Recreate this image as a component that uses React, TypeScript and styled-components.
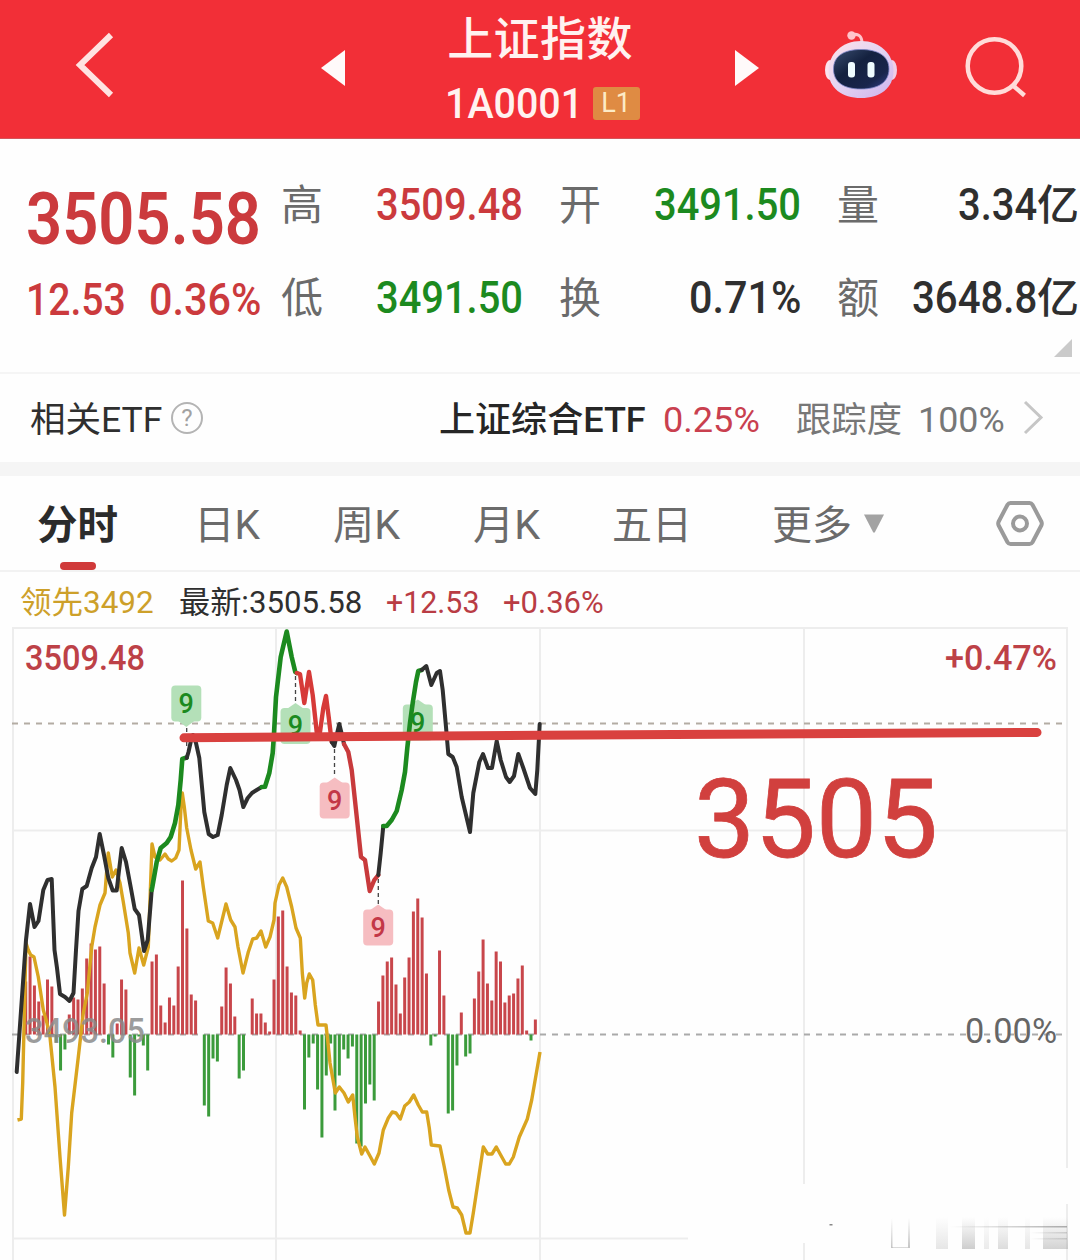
import React, { useLayoutEffect, useRef, useState } from "react";
import styled, { createGlobalStyle } from "styled-components";

const RED = "#cb3a3d";
const GREEN = "#1c8a1f";
const INK = "#2f2f2f";
const GREY = "#6b6b6b";
const FONT = 'Roboto, "Noto Sans CJK SC", sans-serif';

const GlobalStyle = createGlobalStyle`
  * { box-sizing: border-box; }
  html, body { margin: 0; padding: 0; background: #fefefe; }
  body { font-family: ${FONT}; color: ${INK}; overflow: hidden; }
  svg { display: block; }
`;

/* ---------- condensed text ---------- */

const FitBox = styled.span<{ $w: number; $ml?: number }>`
  display: inline-block;
  flex: none;
  width: ${(p) => p.$w}px;
  margin-left: ${(p) => p.$ml ?? 0}px;
  white-space: nowrap;
`;
const FitInner = styled.span`
  display: inline-block;
  transform-origin: 0 50%;
`;

function Fit({ w, ml, children }: { w: number; ml?: number; children: React.ReactNode }) {
  const ref = useRef<HTMLSpanElement>(null);
  const [scale, setScale] = useState(1);
  useLayoutEffect(() => {
    if (ref.current && ref.current.offsetWidth) setScale(w / ref.current.offsetWidth);
  }, [w]);
  return (
    <FitBox $w={w} $ml={ml}>
      <FitInner ref={ref} style={{ transform: `scaleX(${scale})` }}>
        {children}
      </FitInner>
    </FitBox>
  );
}

/* ---------- page and header ---------- */

const Page = styled.main`
  width: 1080px;
  height: 1260px;
  overflow: hidden;
  display: flex;
  flex-direction: column;
  background: #fefefe;
`;

const Header = styled.header`
  flex: none;
  height: 139px;
  background: #f22f37;
  border-bottom: 1px solid #d4555a;
  display: grid;
  grid-template-columns: 321px 24px 390px 24px 64px 74px 67px 1fr;
  align-items: start;
`;
const IconSlot = styled.div<{ $top: number; $left?: number }>`
  padding-top: ${(p) => p.$top}px;
  padding-left: ${(p) => p.$left ?? 0}px;
`;
const TitleBlock = styled.div`
  display: flex;
  flex-direction: column;
  align-items: center;
  color: #fff2f0;
`;
const Title = styled.h1`
  margin: 0;
  padding-top: 9px;
  font-size: 46px;
  font-weight: 500;
  line-height: 60px;
  letter-spacing: 0.4px;
`;
const CodeRow = styled.div`
  display: flex;
  align-items: center;
  height: 33px;
  margin-top: 18px;
  padding-left: 4px;
  font-size: 42px;
  font-weight: 500;
  line-height: 33px;
`;
const LevelBadge = styled.span`
  width: 47px;
  height: 33px;
  margin-left: 10px;
  border-radius: 3px;
  background: #df8b43;
  color: #fdebc6;
  font-size: 27px;
  font-weight: 400;
  line-height: 33px;
  text-align: center;
`;

/* ---------- quote ---------- */

const Quote = styled.section`
  flex: none;
  height: 235px;
  display: flex;
  border-bottom: 2px solid #f5f5f5;
`;
const LastPrice = styled.div`
  width: 281px;
  padding: 34px 0 0 26px;
  color: ${RED};
`;
const BigPrice = styled.div`
  font-size: 73px;
  font-weight: 600;
  line-height: 92px;
`;
const ChangeRow = styled.div`
  display: flex;
  padding-top: 12px;
  font-size: 45px;
  font-weight: 500;
  line-height: 46px;
`;
const Stats = styled.div`
  flex: 1;
  padding-top: 19px;
  display: grid;
  grid-template-columns: repeat(3, 242px);
  grid-auto-rows: 93px;
  column-gap: 36px;
`;
const Stat = styled.div<{ $color?: string }>`
  display: flex;
  align-items: center;
  justify-content: space-between;
  font-size: 45px;
  font-weight: 500;
  color: ${(p) => p.$color ?? INK};
`;
const StatLabel = styled.span`
  padding-top: 3px;
  font-size: 42px;
  font-weight: 400;
  color: ${GREY};
  line-height: 60px;
`;
const StatValue = styled.span`
  display: flex;
  align-items: center;
  line-height: 60px;
`;
const Unit = styled.span`
  padding-top: 2px;
  font-size: 42px;
`;
const Fold = styled.div`
  flex: none;
  align-self: flex-start;
  width: 0;
  height: 0;
  margin: 200px 8px 0 -26px;
  border-left: 18px solid transparent;
  border-bottom: 18px solid #cacaca;
`;

/* ---------- ETF row ---------- */

const EtfRow = styled.section`
  flex: none;
  height: 88px;
  display: flex;
  align-items: center;
  padding-left: 30px;
  font-size: 35px;
  line-height: 50px;
`;
const EtfText = styled.span<{ $color: string; $weight?: number }>`
  display: inline-flex;
  padding-top: 5px;
  color: ${(p) => p.$color};
  font-weight: ${(p) => p.$weight ?? 400};
`;
const Help = styled.span`
  width: 32px;
  height: 32px;
  margin: 0 236px 0 9px;
  border: 2px solid #b4b4b4;
  border-radius: 50%;
  color: #a2a2a2;
  font-size: 24px;
  line-height: 28px;
  text-align: center;
`;
const Band = styled.div`
  flex: none;
  height: 14px;
  background: #f5f5f5;
`;

/* ---------- tabs ---------- */

const Tabs = styled.nav`
  flex: none;
  height: 96px;
  display: flex;
  align-items: stretch;
  padding-left: 37px;
  border-bottom: 2px solid #f2f2f2;
`;
const Tab = styled.div<{ $active?: boolean; $ml?: number }>`
  display: flex;
  flex-direction: column;
  align-items: center;
  margin-left: ${(p) => p.$ml ?? 0}px;
  padding-top: 20px;
  font-size: 40px;
  line-height: 60px;
  font-weight: ${(p) => (p.$active ? 700 : 400)};
  color: ${(p) => (p.$active ? "#2b2b2b" : GREY)};
`;
const Underline = styled.i`
  width: 36px;
  height: 9px;
  margin-top: 6px;
  border-radius: 5px;
  background: #d03a3a;
`;
const TabIcon = styled.div<{ $ml: number; $top: number }>`
  margin-left: ${(p) => p.$ml}px;
  padding-top: ${(p) => p.$top}px;
`;

/* ---------- legend and chart ---------- */

const Legend = styled.div`
  flex: none;
  height: 55px;
  display: flex;
  align-items: center;
  padding: 6px 0 0 20px;
  font-size: 31px;
  line-height: 50px;
`;
const LegendText = styled.span<{ $color: string }>`
  color: ${(p) => p.$color};
  display: inline-flex;
`;
const Chart = styled.svg`
  flex: none;
  width: 1080px;
  height: 633px;
  font-family: ${FONT};
`;

const BARS = [
  0, 0, 53, 78, 49, 33, 19, 55, 48, -8, -36, -15, 20, 37, 35, 46, 76, 91, 85, 88, 51, -10, -23, 11, 55, 45,
  -43, -61, -2, -11, -36, 73, 80, 29, 12, 37, 29, 68, 154, 106, 40, 34, 0, -71, -82, -24, -27, 28, 67, 51, 18,
  -44, -36, 0, 36, 21, 21, 12, 3, 55, 118, 124, 68, 42, 39, 4, -75, -23, -9, -55, -103, -41, -9, -76, -41, -15,
  -24, -12, -109, -112, -69, -50, -66, 33, 59, 73, 77, 50, 21, 57, 77, 123, 136, 117, 61, -11, -2, 84, 39,
  -79, -76, -31, 22, -22, -19, 36, 63, 95, 51, 34, 83, 73, 32, 39, 41, 56, 69, 4, -6, 15,
];

const LEADING =
  "17.5,1120 21.3,1119 22.7,1083 26,943 28.3,950 30.7,955 34,957 38.3,977 43.3,1010 46.7,1022 50,1037 55,1087 60,1157 64.5,1215 68.3,1167 71.7,1113 78.3,1057 83.3,1013 87.3,993 91.7,947 95,927 100,905 105,893 107,867 108.3,853 112.3,877 116,870 120,883 123.3,902 128.3,933 130,953 134.7,973 139,948 143.7,965 148.3,947 150,900 152,844 155,857 160,860 165,854 168.3,859 171.7,861 175.7,858 179,850 181,807 182.3,793 184.3,807 186.7,828 191,850 195.7,869 200,862 203.3,887 208.3,921 212.7,923 217.7,938 226,904 230.7,920 235,927 238,947 243,973 248.3,952 252.7,939 256.7,938 261,931 265.7,947 270,937 274,920 275,903 279,885 282.7,878 286.7,887 291.7,907 296,928 300.3,938 302.3,973 304.7,998 306.7,983 309.3,974 312.7,980 315.3,1005 318,1025 326,1025 327.7,1040 330,1063 335.3,1093 339.3,1087 344,1093 348.3,1102 352.7,1095 355,1117 357.3,1137 361.7,1154 365,1147 370,1156 374.3,1164 379,1153 383.3,1130 388.3,1118 392.3,1112 396,1113 400.3,1119 404.7,1106 409.3,1102 413.7,1095 418.3,1105 422.3,1112 426.7,1112 429.3,1128 431.3,1145 440,1146 444.3,1167 448.7,1190 453,1207 457.3,1208 461.7,1215 466,1233 470,1233 473.3,1213 478.3,1180 483.3,1147 487.7,1154 492,1154 496.3,1147 500.7,1155 505.7,1164 509.3,1164 513.3,1157 519.3,1137 527.3,1119 531.7,1100 540,1052";

const PRICE: { color: string; width: number; points: string }[] = [
  {
    color: INK,
    width: 4,
    points:
      "16.7,1072 26,940 30,904 34.5,927 38.5,921 43.3,890 47.5,880 51.7,879 54.5,950 57,968 60,994 65,997 69.5,1001 73.5,993 76,950 78.5,911 82.3,889 86.7,886 91.7,868 96,857 99.7,834 104,855 108.3,878 112.7,890.5 116.7,890.5 118.7,873 121.7,848 126,862 130.7,887 134.7,909 139,915 144,951 147.7,940 150.7,903 151.7,890",
  },
  {
    color: GREEN,
    width: 4.6,
    points:
      "151.7,890 152.3,887 156.7,862 160.7,848 166.7,843 170.7,837 175,823 178.3,805 180.7,780 182.3,759 186.7,757.5",
  },
  {
    color: INK,
    width: 4,
    points:
      "186.7,758 188.5,752 190.7,742 193,735 196,743 199.3,758 202,787 204.3,812 208.7,834 213,837 217.7,835 221.7,815 226.7,785 230.3,768 236,780 239.5,790 243.3,807 247.7,798 252,793 256.7,790 261.7,787",
  },
  {
    color: GREEN,
    width: 4.6,
    points:
      "261.7,787 265,786.7 269.3,773 272.7,753 273.8,737 276,697 280.7,657 286.7,631.5 291.7,657 295.3,672 296.7,673",
  },
  {
    color: "#d63a38",
    width: 4.4,
    points:
      "296.7,673 300,674 304.3,703 309,672 312.7,695 316.7,732 320,732 323.3,708 326,696 328.7,717 331.7,742",
  },
  { color: INK, width: 4, points: "331.7,742 334.3,746 336.7,735 339.3,724 342,735 344,744" },
  {
    color: "#c83a3c",
    width: 4.4,
    points: "344,744 348.3,752 351.7,770 356,810 361,857 365,860 369.7,891 374.3,880 378.3,875",
  },
  { color: INK, width: 4, points: "378.3,875 380.7,853 383.3,826" },
  {
    color: GREEN,
    width: 4.6,
    points:
      "383.3,826 386.7,826 391.7,820 396.7,811 401.7,790 405,772 407.3,748 410,723 412.7,703 416,682 418.3,671 421.7,670",
  },
  {
    color: INK,
    width: 4,
    points:
      "421.7,670 426.3,666 431.3,685 436.7,673 440,671 442.7,690 446,727 448.3,754 452.7,757 456.7,767 461.7,797 470,832 473.3,793 479.3,762 483,754 488,768 492,768 496.7,741 500.7,760 506,777 509.7,782 514,776 518.3,754 523.3,768 530,788 535.3,794 537.3,770 539.7,724",
  },
];

function Marker({ x, y, up, green }: { x: number; y: number; up?: boolean; green?: boolean }) {
  return (
    <g>
      <g fill={green ? "#b4e0b8" : "#f6bdc1"}>
        <rect x={x - 15} y={y - 17.5} width={30} height={36} rx={4} />
        <path
          d={up ? `M${x - 8} ${y - 17}L${x} ${y - 22.5}L${x + 8} ${y - 17}Z` : `M${x - 8} ${y + 18}L${x} ${y + 24}L${x + 8} ${y + 18}Z`}
        />
      </g>
      <text x={x} y={y + 9.5} fontSize={27} fontWeight={500} textAnchor="middle" fill={green ? GREEN : "#c33747"}>
        9
      </text>
    </g>
  );
}

function IntradayChart() {
  return (
    <Chart viewBox="0 627 1080 633">
      <defs>
        <linearGradient id="fade" x1="0" y1="0" x2="0" y2="1">
          <stop offset="0" stopColor="#999" stopOpacity="0" />
          <stop offset="1" stopColor="#8c8c8c" stopOpacity="0.85" />
        </linearGradient>
        <linearGradient id="streak" x1="0" y1="0" x2="1" y2="0">
          <stop offset="0" stopColor="#999" stopOpacity="0" />
          <stop offset="1" stopColor="#999" stopOpacity="0.8" />
        </linearGradient>
      </defs>

      <g stroke="#ededed" strokeWidth={2} fill="none">
        <path d="M12 628H1068M13 830.5H1067M13 1238.5H688" />
        <path d="M13 628V1260M276 628V1260M540 628V1260M804 628V1184M804 1243V1260M1067 628V1168M1067 1204V1260" />
      </g>
      <path d="M12 723.5H1064" stroke="#b3aca3" strokeWidth={2} strokeDasharray="6 6" />
      <path d="M12 1034.5H1064" stroke="#aaaaaa" strokeWidth={2} strokeDasharray="6 6" />

      <g strokeWidth={3}>
        {BARS.map((v, i) =>
          v === 0 ? null : (
            <line
              key={i}
              x1={17 + i * 4.356}
              x2={17 + i * 4.356}
              y1={1034.5}
              y2={1034.5 - v}
              stroke={v > 0 ? "#c8464b" : "#3b9b3b"}
            />
          )
        )}
      </g>

      <g stroke="#444" strokeWidth={1.3} strokeDasharray="4 3">
        <path d="M186.7 728V746M295.5 676V704M334.5 749V777M378.3 879V905" />
      </g>
      <Marker x={186.3} y={703} green />
      <Marker x={295.5} y={725.5} up green />
      <Marker x={334.7} y={800} up />
      <Marker x={417.8} y={722} up green />
      <Marker x={378.2} y={927} up />

      <polyline points={LEADING} fill="none" stroke="#d9a41f" strokeWidth={3.4} strokeLinejoin="round" />
      {PRICE.map((s, i) => (
        <polyline
          key={i}
          points={s.points}
          fill="none"
          stroke={s.color}
          strokeWidth={s.width}
          strokeLinejoin="round"
          strokeLinecap="round"
        />
      ))}

      <path d="M184 737.8L540 735.2L1037 732.4" fill="none" stroke="#d9413f" strokeWidth={9} strokeLinecap="round" />

      <g fontSize={35}>
        <text x={25} y={669.5} textLength={120} lengthAdjust="spacingAndGlyphs" fill="#bd4147" fontWeight={500}>
          3509.48
        </text>
        <text x={945} y={669.5} textLength={112} lengthAdjust="spacingAndGlyphs" fill="#bd4147" fontWeight={500}>
          +0.47%
        </text>
        <text
          x={25}
          y={1043}
          textLength={120}
          lengthAdjust="spacingAndGlyphs"
          fill="#8a8a8a"
          fillOpacity={0.85}
          fontWeight={500}
        >
          3493.05
        </text>
        <text x={965} y={1043} textLength={92} lengthAdjust="spacingAndGlyphs" fill="#666">
          0.00%
        </text>
      </g>
      <text
        x={694}
        y={857}
        fontSize={110}
        textLength={244}
        lengthAdjust="spacingAndGlyphs"
        fill="#d1403e"
        stroke="#d1403e"
        strokeWidth={0.8}
      >
        3505
      </text>

      <g fill="url(#fade)">
        <rect x={891} y={1218} width={1.5} height={30} opacity={0.6} />
        <rect x={908} y={1218} width={2} height={30} opacity={0.6} />
        <rect x={892} y={1247} width={16} height={1} opacity={0.8} />
        <rect x={936} y={1217} width={12} height={32} opacity={0.25} />
        <rect x={962} y={1217} width={13} height={32} opacity={0.5} />
        <rect x={984} y={1217} width={5} height={32} opacity={0.2} />
        <rect x={998} y={1217} width={10} height={32} opacity={0.35} />
        <rect x={1025} y={1217} width={5} height={32} opacity={0.25} />
        <rect x={1043} y={1217} width={25} height={32} opacity={0.45} />
      </g>
      <g fill="url(#streak)">
        <rect x={950} y={1226} width={117} height={1.5} />
        <rect x={1030} y={1232} width={37} height={1.5} opacity={0.5} />
        <rect x={1030} y={1238} width={37} height={1.5} opacity={0.5} />
      </g>
      <rect x={829.5} y={1224} width={3} height={1.5} fill="#888" />
    </Chart>
  );
}

/* ---------- icons ---------- */

function Robot() {
  return (
    <svg width="76" height="70" viewBox="823 30 76 70">
      <defs>
        <linearGradient id="shell" x1="0" y1="0" x2="1" y2="1">
          <stop offset="0" stopColor="#ffe3ea" />
          <stop offset="0.5" stopColor="#e3d3f2" />
          <stop offset="1" stopColor="#cdb2ec" />
        </linearGradient>
        <linearGradient id="visor" x1="0" y1="0" x2="1" y2="1">
          <stop offset="0" stopColor="#3a4d70" />
          <stop offset="0.4" stopColor="#14213f" />
          <stop offset="0.75" stopColor="#19254c" />
          <stop offset="1" stopColor="#33408a" />
        </linearGradient>
      </defs>
      <path d="M852 35C858 33 862 36 862 43" fill="none" stroke="#ffc4cb" strokeWidth="3" />
      <circle cx="851.5" cy="35.500" r="4.200" fill="#ffc4cb" />
      <ellipse cx="830" cy="70" rx="5" ry="10" fill="#fbe3ee" />
      <ellipse cx="892" cy="70" rx="5" ry="10" fill="#f0cfe6" />
      <path
        d="M861 41C880 41 893.500 54 893.500 71C893.500 88 880 98 861 98C842 98 828.500 88 828.500 71C828.500 54 842 41 861 41Z"
        fill="url(#shell)"
      />
      <path
        d="M861 49.500C878 49.500 889 56 889 69C889 82.500 878 89 861 89C844 89 833.500 82.500 833.500 69C833.500 56 844 49.500 861 49.500Z"
        fill="url(#visor)"
        stroke="#7d86c8"
        strokeWidth="0.800"
      />
      <rect x="848" y="62" width="7" height="15.500" rx="3" fill="#effcff" />
      <rect x="867.500" y="62" width="7" height="15.500" rx="3" fill="#effcff" />
    </svg>
  );
}

export default function App() {
  return (
    <Page>
      <GlobalStyle />
      <Header>
        <IconSlot $top={31} $left={74}>
          <svg width="42" height="68" viewBox="74 31 42 68">
            <path d="M111 35L80 65L111 95" fill="none" stroke="#ffe3e1" strokeWidth="6" />
          </svg>
        </IconSlot>
        <IconSlot $top={50}>
          <svg width="24" height="36">
            <path d="M24 0V36L0 18Z" fill="#fffafa" />
          </svg>
        </IconSlot>
        <TitleBlock>
          <Title>上证指数</Title>
          <CodeRow>
            <Fit w={138}>1A0001</Fit>
            <LevelBadge>L1</LevelBadge>
          </CodeRow>
        </TitleBlock>
        <IconSlot $top={50}>
          <svg width="24" height="36">
            <path d="M0 0V36L24 18Z" fill="#fffafa" />
          </svg>
        </IconSlot>
        <div />
        <IconSlot $top={30}>
          <Robot />
        </IconSlot>
        <div />
        <IconSlot $top={36}>
          <svg width="66" height="66" viewBox="964 36 66 66">
            <circle cx="994.5" cy="66" r="26.800" fill="none" stroke="#ffdcd9" strokeWidth="4.500" />
            <path d="M1013 85.500L1024.500 95.500" stroke="#ffdcd9" strokeWidth="4.500" />
          </svg>
        </IconSlot>
      </Header>

      <Quote>
        <LastPrice>
          <BigPrice>
            <Fit w={235}>3505.58</Fit>
          </BigPrice>
          <ChangeRow>
            <Fit w={100}>12.53</Fit>
            <Fit w={112} ml={23}>0.36%</Fit>
          </ChangeRow>
        </LastPrice>
        <Stats>
          <Stat $color={RED}>
            <StatLabel>高</StatLabel>
            <StatValue><Fit w={147}>3509.48</Fit></StatValue>
          </Stat>
          <Stat $color={GREEN}>
            <StatLabel>开</StatLabel>
            <StatValue><Fit w={147}>3491.50</Fit></StatValue>
          </Stat>
          <Stat>
            <StatLabel>量</StatLabel>
            <StatValue><Fit w={79}>3.34</Fit><Unit>亿</Unit></StatValue>
          </Stat>
          <Stat $color={GREEN}>
            <StatLabel>低</StatLabel>
            <StatValue><Fit w={147}>3491.50</Fit></StatValue>
          </Stat>
          <Stat>
            <StatLabel>换</StatLabel>
            <StatValue><Fit w={112}>0.71%</Fit></StatValue>
          </Stat>
          <Stat>
            <StatLabel>额</StatLabel>
            <StatValue><Fit w={125}>3648.8</Fit><Unit>亿</Unit></StatValue>
          </Stat>
        </Stats>
        <Fold />
      </Quote>

      <EtfRow>
        <EtfText $color={INK}><Fit w={132}>相关ETF</Fit></EtfText>
        <Help>?</Help>
        <EtfText $color="#262626" $weight={500}><Fit w={207}>上证综合ETF</Fit></EtfText>
        <EtfText $color="#c9404f"><Fit w={97} ml={17}>0.25%</Fit></EtfText>
        <EtfText $color="#777"><Fit w={106} ml={36}>跟踪度</Fit><Fit w={87} ml={16}>100%</Fit></EtfText>
        <TabIcon $ml={18} $top={0}>
          <svg width="22" height="36">
            <path d="M2 2L18 17.500L2 33" fill="none" stroke="#c6c6c6" strokeWidth="3" />
          </svg>
        </TabIcon>
      </EtfRow>
      <Band />

      <Tabs>
        <Tab $active><Fit w={81}>分时</Fit><Underline /></Tab>
        <Tab $ml={76}><Fit w={66}>日K</Fit></Tab>
        <Tab $ml={73}><Fit w={67}>周K</Fit></Tab>
        <Tab $ml={73}><Fit w={67}>月K</Fit></Tab>
        <Tab $ml={72}><Fit w={80}>五日</Fit></Tab>
        <Tab $ml={80}><Fit w={80}>更多</Fit></Tab>
        <TabIcon $ml={11} $top={38}>
          <svg width="22" height="19">
            <path d="M1 0.500H21L12 18Q11 19.500 10 18Z" fill="#a3a3a3" />
          </svg>
        </TabIcon>
        <TabIcon $ml={111} $top={24}>
          <svg width="48" height="48" viewBox="0 0 48 48" fill="none" stroke="#9a9a9a">
            <path
              d="M14.500 3H33.500Q35.500 3 36.500 4.700L45.300 21.500Q46.300 23.500 45.300 25.500L36.500 42.300Q35.500 44 33.500 44H14.500Q12.500 44 11.500 42.300L2.700 25.500Q1.700 23.500 2.700 21.500L11.500 4.700Q12.500 3 14.500 3Z"
              strokeWidth="4"
            />
            <circle cx="24" cy="23.500" r="7" strokeWidth="4" />
          </svg>
        </TabIcon>
      </Tabs>

      <Legend>
        <LegendText $color="#cda02a"><Fit w={134}>领先3492</Fit></LegendText>
        <LegendText $color={INK}><Fit w={183} ml={25}>最新:3505.58</Fit></LegendText>
        <LegendText $color="#b93c44"><Fit w={93} ml={24}>+12.53</Fit><Fit w={101} ml={24}>+0.36%</Fit></LegendText>
      </Legend>
      <IntradayChart />
    </Page>
  );
}
